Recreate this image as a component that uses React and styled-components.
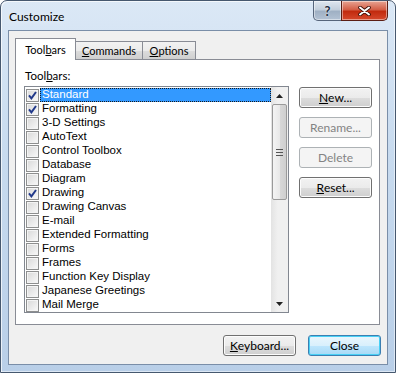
import React from 'react';
import styled, { createGlobalStyle, css } from 'styled-components';

const GlobalStyle = createGlobalStyle`
  html, body {
    margin: 0;
    padding: 0;
    width: 396px;
    height: 373px;
    overflow: hidden;
    background: #ffffff;
  }
  * { box-sizing: border-box; }
`;

const uiFont = `Lato, "Noto Sans", sans-serif`;
const listFont = `"Liberation Sans", Arial, sans-serif`;

const Window = styled.div`
  width: 396px;
  height: 373px;
  border: 1px solid #46586f;
  border-radius: 7px 7px 0 0;
  background: linear-gradient(to bottom, #dbe8f6 0%, #c8dbef 40%, #b9cfe8 100%);
  box-shadow: inset 1px 1px 0 rgba(255, 255, 255, 0.7), inset -1px -1px 0 rgba(255, 255, 255, 0.5);
  padding: 0 7px 7px 7px;
  display: flex;
  flex-direction: column;
`;

const TitleBar = styled.div`
  height: 29px;
  display: flex;
  align-items: flex-start;
`;

const Title = styled.div`
  font-family: ${uiFont};
  font-size: 12px;
  color: #000;
  margin-top: 8px;
  margin-left: 1px;
  text-shadow: 0 0 8px rgba(255, 255, 255, 0.9);
`;

const CaptionButtons = styled.div`
  margin-left: auto;
  display: flex;
  height: 20px;
`;

const CaptionButton = styled.div`
  width: ${p => p.$w}px;
  height: 20px;
  display: flex;
  align-items: center;
  justify-content: center;
  border: 1px solid #56657b;
  border-top: none;
  ${p => p.$close ? css`
    background: linear-gradient(to bottom, #e8a493 0%, #d45f47 45%, #c22b0f 55%, #d6492d 100%);
    border-color: #5b1e14;
    border-radius: 0 0 5px 0;
    margin-left: -1px;
  ` : css`
    background: linear-gradient(to bottom, #dfe7f0 0%, #c3cfdc 45%, #9fb0c4 55%, #b3c2d4 100%);
    border-radius: 0 0 0 5px;
  `}
  box-shadow: inset 0 0 0 1px rgba(255, 255, 255, 0.45);
  font-family: ${uiFont};
  font-weight: bold;
  font-size: 13px;
  color: #1f2d3f;
  text-shadow: 0 0 2px #fff;
`;

const Client = styled.div`
  flex: 1;
  background: #f0f0f0;
  border: 1px solid #7a8ea8;
  padding: 7px 7px 8px 6px;
  display: flex;
  flex-direction: column;
`;

const TabStrip = styled.div`
  display: flex;
  align-items: flex-end;
  height: 22px;
  margin-bottom: -1px;
  position: relative;
  z-index: 1;
`;

const Tab = styled.div`
  width: ${p => p.$w}px;
  font-family: ${uiFont};
  font-size: 11px;
  color: #000;
  border: 1px solid #898c95;
  display: flex;
  align-items: center;
  justify-content: center;
  ${p => p.$active ? css`
    height: 22px;
    background: #ffffff;
    border-bottom: none;
    padding-bottom: 1px;
  ` : css`
    height: 18px;
    margin-bottom: 1px;
    margin-left: -1px;
    background: linear-gradient(to bottom, #f2f2f2 0%, #ebebeb 50%, #dddddd 51%, #cfcfcf 100%);
    border-bottom: none;
  `}
`;

const U = styled.span`
  text-decoration: underline;
  text-underline-offset: 1px;
`;

const Panel = styled.div`
  width: 365px;
  height: 266px;
  background: #ffffff;
  border: 1px solid #898c95;
  padding: 9px 7px 0 8px;
  display: flex;
  flex-direction: column;
`;

const Label = styled.div`
  font-family: ${uiFont};
  font-size: 11.5px;
  line-height: 14px;
  height: 14px;
  padding-left: 1px;
  margin-bottom: 3px;
`;

const PanelBody = styled.div`
  display: flex;
  gap: 10px;
`;

const ListBox = styled.div`
  width: 265px;
  height: 227px;
  border: 1px solid #828790;
  display: flex;
  background: #fff;
`;

const Rows = styled.div`
  flex: 1;
  padding-top: 1px;
  overflow: hidden;
`;

const Row = styled.div`
  height: 14px;
  display: flex;
  align-items: center;
  font-family: ${listFont};
  font-size: 11.5px;
`;

const CheckBox = styled.div`
  width: 13px;
  height: 13px;
  margin-left: 1px;
  border: 1px solid #8e8f8f;
  background: linear-gradient(135deg, #d8d8d8 0%, #ececec 60%, #fafafa 100%);
  box-shadow: inset 0 0 0 1px #f4f4f4;
  display: flex;
  align-items: center;
  justify-content: center;
`;

const ItemText = styled.div`
  flex: 1;
  height: 14px;
  margin-left: 1px;
  padding-left: 2px;
  line-height: 13px;
  ${p => p.$selected ? css`
    background: #3399ff;
    color: #fff;
    outline: 1px dotted #1a1a1a;
    outline-offset: -1px;
  ` : css`
    color: #000;
  `}
`;

const ScrollBar = styled.div`
  width: 17px;
  display: flex;
  flex-direction: column;
  background: linear-gradient(to right, #e3e3e3, #f0f0f0 40%, #f0f0f0);
`;

const Arrow = styled.div`
  height: 17px;
  display: flex;
  align-items: center;
  justify-content: center;
`;

const Track = styled.div`
  flex: 1;
  display: flex;
  flex-direction: column;
`;

const Thumb = styled.div`
  height: 96px;
  margin: 0 1px;
  border: 1px solid #9a9a9a;
  border-radius: 2px;
  background: linear-gradient(to right, #f4f4f4, #e9e9e9 50%, #d8d8d8 51%, #cfcfcf);
  display: flex;
  align-items: center;
  justify-content: center;
`;

const Side = styled.div`
  display: flex;
  flex-direction: column;
  gap: 9px;
  padding-top: 1px;
`;

const Button = styled.div`
  width: 73px;
  height: 21px;
  border: 1px solid ${p => p.$disabled ? '#adb2b5' : p.$default ? '#3c7fb1' : '#707070'};
  border-radius: 3px;
  font-family: ${uiFont};
  font-size: 12px;
  color: ${p => p.$disabled ? '#838383' : '#000'};
  display: flex;
  align-items: center;
  justify-content: center;
  ${p => p.$disabled ? css`
    background: #f4f4f4;
  ` : p.$default ? css`
    background: linear-gradient(to bottom, #eaf6fd 0%, #d9f0fc 50%, #bee6fd 51%, #a7d9f5 100%);
    box-shadow: inset 0 0 0 1px #48d0f5;
  ` : css`
    background: linear-gradient(to bottom, #f2f2f2 0%, #ebebeb 50%, #dddddd 51%, #cfcfcf 100%);
    box-shadow: inset 0 0 0 1px #fcfcfc;
  `}
`;

const Footer = styled.div`
  display: flex;
  justify-content: flex-end;
  gap: 12px;
  margin-top: 10px;
  margin-right: -1px;
`;

const Check = () => (
  <svg width="9" height="9" viewBox="0 0 9 9">
    <path d="M1 4.3 L3.4 7.3 L8 1" fill="none" stroke="#21398a" strokeWidth="2" />
  </svg>
);

const CloseX = () => (
  <svg width="13" height="10" viewBox="0 0 13 10">
    <path d="M2 1.5 L11 8.5 M11 1.5 L2 8.5" stroke="#3c0f08" strokeWidth="3.6" strokeLinecap="round" />
    <path d="M2 1.5 L11 8.5 M11 1.5 L2 8.5" stroke="#ffffff" strokeWidth="2" strokeLinecap="round" />
  </svg>
);

const UpArrow = () => (
  <svg width="7" height="4" viewBox="0 0 7 4"><path d="M0 4 L3.5 0 L7 4 Z" fill="#222" /></svg>
);

const DownArrow = () => (
  <svg width="7" height="4" viewBox="0 0 7 4"><path d="M0 0 L7 0 L3.5 4 Z" fill="#222" /></svg>
);

const Grip = () => (
  <svg width="7" height="7" viewBox="0 0 7 7">
    <path d="M0 0.5 H7 M0 3.5 H7 M0 6.5 H7" stroke="#555" strokeWidth="1" />
  </svg>
);

const toolbars = [
  { name: 'Standard', checked: true },
  { name: 'Formatting', checked: true },
  { name: '3-D Settings' },
  { name: 'AutoText' },
  { name: 'Control Toolbox' },
  { name: 'Database' },
  { name: 'Diagram' },
  { name: 'Drawing', checked: true },
  { name: 'Drawing Canvas' },
  { name: 'E-mail' },
  { name: 'Extended Formatting' },
  { name: 'Forms' },
  { name: 'Frames' },
  { name: 'Function Key Display' },
  { name: 'Japanese Greetings' },
  { name: 'Mail Merge' },
];

export default function App() {
  return (
    <>
      <GlobalStyle />
      <Window>
        <TitleBar>
          <Title>Customize</Title>
          <CaptionButtons>
            <CaptionButton $w={29}>?</CaptionButton>
            <CaptionButton $w={47} $close><CloseX /></CaptionButton>
          </CaptionButtons>
        </TitleBar>
        <Client>
          <TabStrip>
            <Tab $w={61} $active>Tool<U>b</U>ars</Tab>
            <Tab $w={68}><U>C</U>ommands</Tab>
            <Tab $w={54}><U>O</U>ptions</Tab>
          </TabStrip>
          <Panel>
            <Label>Tool<U>b</U>ars:</Label>
            <PanelBody>
              <ListBox>
                <Rows>
                  {toolbars.map((t, i) => (
                    <Row key={t.name}>
                      <CheckBox>{t.checked && <Check />}</CheckBox>
                      <ItemText $selected={i === 0}>{t.name}</ItemText>
                    </Row>
                  ))}
                </Rows>
                <ScrollBar>
                  <Arrow><UpArrow /></Arrow>
                  <Track>
                    <Thumb><Grip /></Thumb>
                  </Track>
                  <Arrow><DownArrow /></Arrow>
                </ScrollBar>
              </ListBox>
              <Side>
                <Button><U>N</U>ew...</Button>
                <Button $disabled>Rename...</Button>
                <Button $disabled>Delete</Button>
                <Button><U>R</U>eset...</Button>
              </Side>
            </PanelBody>
          </Panel>
          <Footer>
            <Button><U>K</U>eyboard...</Button>
            <Button $default>Close</Button>
          </Footer>
        </Client>
      </Window>
    </>
  );
}
